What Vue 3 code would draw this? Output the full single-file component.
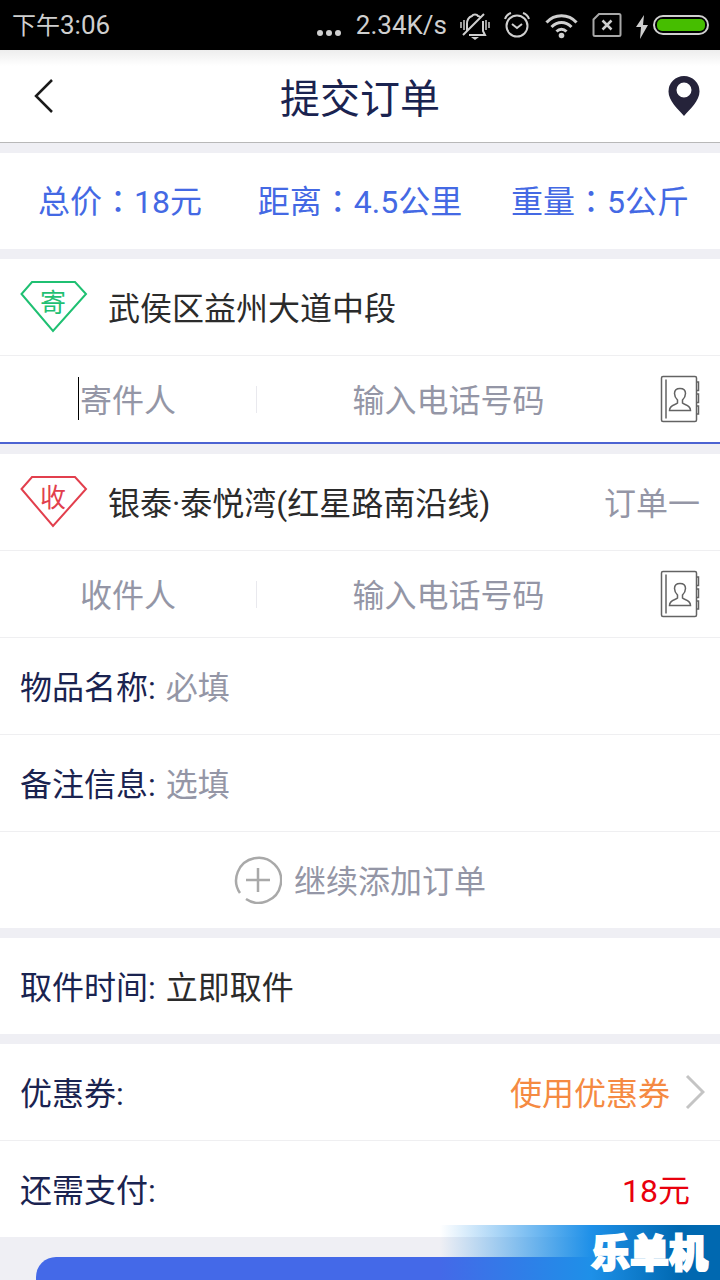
<script setup>
import { ref } from 'vue'

const summary = [
  { label: '总价', value: '18元' },
  { label: '距离', value: '4.5公里' },
  { label: '重量', value: '5公斤' }
]

const stops = ref([
  { kind: 'send', mark: '寄', address: '武侯区益州大道中段', order: '', who: '寄件人', name: '', phone: '', active: true },
  { kind: 'receive', mark: '收', address: '银泰·泰悦湾(红星路南沿线)', order: '订单一', who: '收件人', name: '', phone: '', active: false }
])

const goods = ref('')
const remark = ref('')
</script>

<template>
  <div class="page">
    <div class="status">
      <span class="clock"><span class="period">下午</span>3:06</span>
      <div class="indicators">
        <svg class="dots" width="26" height="30" viewBox="0 0 26 30" fill="#cfcfcf">
          <circle cx="4" cy="23" r="3" /><circle cx="13" cy="23" r="3" /><circle cx="22" cy="23" r="3" />
        </svg>
        <span class="speed">2.34K/s</span>
        <svg class="bell" width="30" height="30" viewBox="0 0 30 30" fill="none" stroke="#cfcfcf" stroke-width="2">
          <path d="M7 21V14c0-4 2-7 5-8 1-2 5-2 6 0 1 0 2 1 3 2M23 11v10l2 4H9M3 25 24 4" />
          <path d="M1 12v6M4 10v10M26 10v10M29 12v6" stroke-width="1.500" />
          <path d="M11 27h8l-4 3z" fill="#cfcfcf" stroke="none" />
        </svg>
        <svg class="alarm" width="26" height="30" viewBox="0 0 26 30" fill="none" stroke="#cfcfcf" stroke-width="2">
          <circle cx="13" cy="16" r="10.500" />
          <path d="M1 9c1-3 3-5 6-6M25 9c-1-3-3-5-6-6M8 14l5 4 5-4" />
        </svg>
        <svg class="wifi" width="33" height="30" viewBox="0 0 33 30" fill="none" stroke="#cfcfcf" stroke-width="3">
          <path d="M1.500 12.500c8-9 22-9 30 0M6.500 17c6-6 14-6 20 0M11.500 21.500c3-3 7-3 10 0" />
          <circle cx="16.500" cy="25.500" r="2.800" fill="#cfcfcf" stroke="none" />
        </svg>
        <svg class="sim" width="30" height="30" viewBox="0 0 30 30" fill="none" stroke="#a8a8a8" stroke-width="2">
          <path d="M7 4h20a1.500 1.500 0 0 1 1.500 1.500v19A1.500 1.500 0 0 1 27 26H3a1.500 1.500 0 0 1-1.500-1.500V9.500z" />
          <path d="m10.500 10.500 9 9m0-9-9 9" stroke="#cfcfcf" stroke-width="2.500" />
        </svg>
        <svg class="bolt" width="12" height="30" viewBox="0 0 12 30" fill="#cfcfcf">
          <path d="M8 5 0 17h5L4 29l8-14H7z" />
        </svg>
        <svg class="battery" width="56" height="30" viewBox="0 0 56 30">
          <rect x="1" y="6" width="54" height="18" rx="9" fill="#000" stroke="#cfcfcf" stroke-width="2" />
          <rect x="4" y="9" width="48" height="12" rx="5" fill="#46be00" />
        </svg>
      </div>
    </div>

    <header class="header">
      <button class="back" type="button" aria-label="返回">
        <svg width="20" height="36" viewBox="0 0 20 36" fill="none" stroke="#1b1b1b" stroke-width="2.500">
          <path d="M18 2 2 18l16 16" />
        </svg>
      </button>
      <h1>提交订单</h1>
      <button class="pin" type="button" aria-label="地图">
        <svg width="32" height="40" viewBox="0 0 32 40">
          <path fill="#25233a" fill-rule="evenodd" d="M16 0A15.500 15.500 0 0 0 .500 15.500C.500 25 10 33 16 40c6-7 15.500-15 15.500-24.500A15.500 15.500 0 0 0 16 0zm0 6.500a7.500 7.500 0 1 1 0 15 7.500 7.500 0 0 1 0-15z" />
        </svg>
      </button>
    </header>

    <main class="content">
      <section class="card summary">
        <span v-for="s in summary" :key="s.label">{{ s.label }}<span class="colon">：</span>{{ s.value }}</span>
      </section>

      <section v-for="(stop, i) in stops" :key="stop.kind" class="card" :class="stop.kind">
        <div class="row address">
          <svg class="gem" width="68" height="54" viewBox="0 0 68 54">
            <path d="M12 2h43l11 12-33 37L1.500 14z" fill="none" stroke="currentColor" stroke-width="2" />
            <text x="33" y="32" text-anchor="middle" fill="currentColor">{{ stop.mark }}</text>
          </svg>
          <span class="text place">{{ stop.address }}</span>
          <span class="text order">{{ stop.order }}</span>
        </div>
        <div class="contact" :class="{ active: stop.active }">
          <label class="who">
            <input v-model="stop.name" type="text" :aria-label="stop.who" :placeholder="stop.who">
            <span v-if="stop.active" class="caret"></span>
          </label>
          <span class="divider"></span>
          <input v-model="stop.phone" class="phone" type="tel" aria-label="电话号码" placeholder="输入电话号码">
          <button class="book" type="button" aria-label="通讯录">
            <svg width="40" height="48" viewBox="0 0 40 48" fill="none" stroke="#636363" stroke-width="1.500">
              <rect x="1.500" y="1.500" width="35" height="45" rx="1.500" />
              <path d="M6 4.500v39M36.500 7h2v8.500h-2M36.500 19h2v8.500h-2M36.500 31h2v8h-2" />
              <path d="M17.500 28v-3c-2-2-3-4-3-6.500 0-3 2-5 5.500-5s5.500 2 5.500 5c0 2.500-1 4.500-3 6.500v3c1.500 2 8 1.500 8 7.500h-21c0-6 6.500-5.500 8-7.500z" />
            </svg>
          </button>
        </div>
        <template v-if="i === 1">
          <div class="row ruled">
            <label class="text label" for="goods">物品名称:</label>
            <input id="goods" v-model="goods" type="text" placeholder="必填">
          </div>
          <div class="row ruled">
            <label class="text label" for="remark">备注信息:</label>
            <input id="remark" v-model="remark" type="text" placeholder="选填">
          </div>
          <button class="row ruled add" type="button">
            <svg width="48" height="48" viewBox="0 0 48 48" fill="none" stroke="#a9a9a9" stroke-width="2.500">
              <path d="M6 37A22.500 22.500 0 1 1 12 43M12 24h24M24 12v24" />
            </svg>
            <span class="text">继续添加订单</span>
          </button>
        </template>
      </section>

      <section class="card row">
        <span class="text label">取件时间:</span>
        <span class="text">立即取件</span>
      </section>

      <section class="card">
        <div class="row coupon">
          <span class="text label">优惠券:</span>
          <button type="button">
            <span class="text">使用优惠券</span>
            <svg width="20" height="36" viewBox="0 0 20 36" fill="none" stroke="#c4c4c4" stroke-width="3">
              <path d="m2 2 16 16L2 34" />
            </svg>
          </button>
        </div>
        <div class="row ruled pay">
          <span class="text label">还需支付:</span>
          <span class="text price">18元</span>
        </div>
      </section>

      <button class="submit" type="button" aria-label="提交订单"></button>
    </main>

    <div class="watermark">乐单机</div>
  </div>
</template>

<style>
body {
  margin: 0;
}
</style>

<style scoped>
.page {
  position: relative;
  display: flex;
  flex-direction: column;
  height: 100vh;
  overflow: hidden;
  background: #efeff4;
  color: #2b2b2b;
  font: 32px/1 Roboto, "Noto Sans CJK SC", sans-serif;
}

.page * {
  box-sizing: border-box;
}

button,
input {
  margin: 0;
  padding: 0;
  border: 0;
  outline: 0;
  background: none;
  color: inherit;
  font: inherit;
}

input {
  min-width: 0;
  height: 48px;
  padding-top: 4px;
}

input::placeholder {
  color: #9496a6;
  opacity: 1;
}

svg {
  display: block;
  flex: none;
}

.text {
  padding-top: 4px;
}

.status {
  display: flex;
  flex: none;
  align-items: center;
  justify-content: space-between;
  height: 50px;
  padding: 0 11px 0 12px;
  background: #000;
  color: #cfcfcf;
  font-size: 26px;
}

.period {
  font-size: 24px;
}

.indicators {
  display: flex;
  align-items: center;
}

.speed {
  margin: 0 13px 0 14px;
}

.alarm {
  margin-left: 14px;
}

.wifi {
  margin-left: 15px;
}

.sim,
.bolt {
  margin-left: 14px;
}

.battery {
  margin-left: 5px;
}

.header {
  display: grid;
  flex: none;
  grid-template-columns: 1fr auto 1fr;
  align-items: center;
  height: 93px;
  padding: 0 20px;
  border-bottom: 1px solid #b8b8b8;
  background: linear-gradient(#ededed, #fff 16px);
}

.header h1 {
  margin: 0;
  padding-top: 8px;
  color: #1a2350;
  font-size: 40px;
  font-weight: 400;
  line-height: 48px;
}

.back {
  justify-self: start;
  padding: 0 14px;
}

.pin {
  justify-self: end;
}

.content {
  display: flex;
  flex: 1;
  flex-direction: column;
  gap: 10px;
  min-height: 0;
  padding-top: 10px;
}

.card {
  flex: none;
  background: #fff;
}

.summary {
  display: grid;
  grid-template-columns: repeat(3, 1fr);
  align-items: center;
  height: 96px;
  padding-bottom: 2px;
  color: #4469e4;
  text-align: center;
}

.colon {
  font-family: "Noto Sans CJK TC", sans-serif;
}

.row {
  display: flex;
  align-items: center;
  width: 100%;
  height: 96px;
  padding: 0 20px;
}

.ruled {
  height: 97px;
  border-top: 1px solid #efeff1;
}

.row input {
  flex: 1;
}

.label {
  margin-right: 10px;
  color: #1a2350;
}

.gem {
  margin-right: 20px;
  font-size: 26px;
}

.send .gem {
  color: #1fc072;
}

.receive .gem {
  color: #e23f4d;
}

.place {
  flex: 1;
}

.order {
  color: #9496a6;
}

.contact {
  display: flex;
  align-items: center;
  height: 87px;
  border-top: 1px solid #efeff1;
}

.contact.active {
  height: 89px;
  border-bottom: 2px solid #4c63d2;
}

.contact input {
  text-align: center;
}

.who {
  position: relative;
  display: flex;
  width: 256px;
}

.who input {
  width: 100%;
}

.caret {
  position: absolute;
  top: 2px;
  left: calc(50% - 50px);
  width: 1px;
  height: 43px;
  background: #000;
}

.divider {
  width: 1px;
  height: 27px;
  background: #e9e9ee;
}

.phone {
  flex: 1;
}

.book {
  padding: 0 20px;
}

.add {
  justify-content: center;
  gap: 12px;
  color: #9496a6;
}

.coupon,
.pay {
  justify-content: space-between;
}

.coupon {
  padding-right: 15px;
}

.coupon button {
  display: flex;
  align-items: center;
  gap: 15px;
  color: #f58a42;
}

.pay {
  padding-right: 30px;
}

.price {
  color: #e9000d;
}

.submit {
  flex: none;
  height: 88px;
  margin: 10px 36px;
  border-radius: 20px;
  background: #4469e8;
}

.watermark {
  position: absolute;
  right: 0;
  bottom: 0;
  width: 280px;
  height: 55px;
  padding: 4px 12px 0 0;
  background: linear-gradient(90deg, transparent, #1e90e8 54%, #0068b0 86%);
  color: #fff;
  font-size: 39px;
  font-weight: 900;
  line-height: 51px;
  text-align: right;
  -webkit-text-stroke: 2px #fff;
}
</style>
